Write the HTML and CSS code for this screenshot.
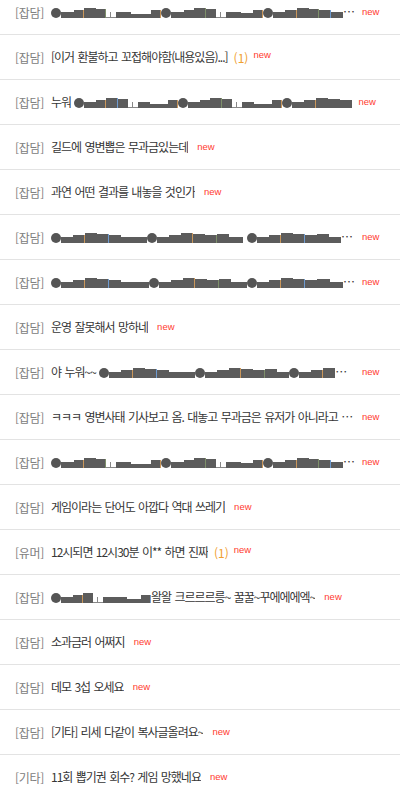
FILE: index.html
```html
<!DOCTYPE html>
<html lang="ko">
<head>
<meta charset="utf-8">
<title>게시판</title>
<link rel="stylesheet" href="styles.css">
</head>
<body>
<ul class="list">
  <li class="row"><span class="cat">[잡담]</span><span class="title"><span class="cz"><i class="c"></i><i class="k w13 h6"></i><i class="k w10 h8 eo"></i><i class="k w12 h10"></i><i class="k w10 h9 eg"></i><i class="tee"></i><i class="k w15 h6"></i><i class="k w20 h4"></i><i class="k w10 h8 eo"></i><i class="c"></i><i class="k w13 h6"></i><i class="k w10 h8"></i><i class="k w12 h10 eg"></i><i class="k w10 h9"></i><i class="tee"></i><i class="k w15 h6"></i><i class="k w12 h5"></i><i class="k w10 h8 eo"></i><i class="c"></i><i class="k w12 h6"></i><i class="k w12 h8 eo"></i><i class="k w12 h10"></i><i class="k w10 h9 eg"></i><i class="k w12 h8 eb"></i><i class="k w12 h6"></i><i class="k w12 h8"></i><i class="k w12 h9"></i></span></span><span class="new tr">new</span></li>
  <li class="row"><span class="cat">[잡담]</span><span class="title">[이거 환불하고 꼬접해야함(내용있음)...]</span><span class="cnt">(1)</span><span class="new sm">new</span></li>
  <li class="row"><span class="cat">[잡담]</span><span class="title">누워 <span class="cz"><i class="c"></i><i class="k w12 h6"></i><i class="k w10 h8 eo"></i><i class="k w12 h10 eb"></i><i class="k w10 h9"></i><i class="tee"></i><i class="k w12 h6"></i><i class="k w18 h4"></i><i class="k w10 h8 eo"></i><i class="c"></i><i class="k w12 h6"></i><i class="k w10 h8"></i><i class="k w12 h10 eg"></i><i class="k w10 h9"></i><i class="tee"></i><i class="k w12 h6"></i><i class="k w18 h4"></i><i class="k w10 h8 eo"></i><i class="c"></i><i class="k w12 h6"></i><i class="k w12 h8 eo"></i><i class="k w12 h10"></i><i class="k w12 h9"></i><i class="k w12 h8"></i></span></span><span class="new tr">new</span></li>
  <li class="row"><span class="cat">[잡담]</span><span class="title">길드에 영변뽑은 무과금있는데</span><span class="new">new</span></li>
  <li class="row"><span class="cat">[잡담]</span><span class="title">과연 어떤 결과를 내놓을 것인가</span><span class="new">new</span></li>
  <li class="row"><span class="cat">[잡담]</span><span class="title"><span class="cz"><i class="c"></i><i class="k w12 h6"></i><i class="k w12 h8 eo"></i><i class="k w12 h10"></i><i class="k w12 h9 eb"></i><i class="k w12 h8"></i><i class="k w12 h6"></i><i class="k w14 h6"></i><i class="c"></i><i class="k w12 h6"></i><i class="k w12 h8"></i><i class="k w12 h10 eo"></i><i class="k w12 h9"></i><i class="k w12 h8 eg"></i><i class="k w12 h9"></i><i class="k w14 h6"></i><i class="gap"></i><i class="c"></i><i class="k w12 h6"></i><i class="k w12 h8 eo"></i><i class="k w12 h10"></i><i class="k w12 h9 eb"></i><i class="k w12 h8"></i><i class="k w12 h9"></i><i class="k w12 h6"></i><i class="k w12 h8"></i><i class="k w12 h9"></i><i class="k w12 h6"></i></span></span><span class="new tr">new</span></li>
  <li class="row"><span class="cat">[잡담]</span><span class="title"><span class="cz"><i class="c"></i><i class="k w12 h6"></i><i class="k w12 h8 eo"></i><i class="k w12 h10"></i><i class="k w12 h9 eb"></i><i class="k w12 h8"></i><i class="k w12 h6"></i><i class="k w16 h6"></i><i class="c"></i><i class="k w12 h6"></i><i class="k w12 h8"></i><i class="k w12 h10 eo"></i><i class="k w12 h9"></i><i class="k w12 h8 eg"></i><i class="k w12 h9"></i><i class="k w16 h6"></i><i class="c"></i><i class="k w12 h6"></i><i class="k w12 h8 eo"></i><i class="k w12 h10"></i><i class="k w12 h9 eb"></i><i class="k w12 h8"></i><i class="k w13 h9"></i><i class="k w13 h6"></i><i class="k w18 h8"></i></span></span><span class="new tr">new</span></li>
  <li class="row"><span class="cat">[잡담]</span><span class="title">운영 잘못해서 망하네</span><span class="new">new</span></li>
  <li class="row"><span class="cat">[잡담]</span><span class="title">야 누워~~ <span class="cz"><i class="c"></i><i class="k w12 h6"></i><i class="k w12 h8 eo"></i><i class="k w12 h10"></i><i class="k w12 h9 eb"></i><i class="k w12 h8"></i><i class="k w12 h6"></i><i class="k w14 h6"></i><i class="c"></i><i class="k w12 h6"></i><i class="k w12 h8"></i><i class="k w12 h10 eo"></i><i class="k w12 h9"></i><i class="k w12 h8 eg"></i><i class="k w12 h9"></i><i class="k w12 h6"></i><i class="c"></i><i class="k w12 h6"></i><i class="k w12 h8 eo"></i><i class="k w12 h10"></i><i class="k w12 h9"></i><i class="k w12 h8"></i></span></span><span class="new tr">new</span></li>
  <li class="row"><span class="cat">[잡담]</span><span class="title">ㅋㅋㅋ 영변사태 기사보고 옴. 대놓고 무과금은 유저가 아니라고 하는데 이게 말이 되냐</span><span class="new tr">new</span></li>
  <li class="row"><span class="cat">[잡담]</span><span class="title"><span class="cz"><i class="c"></i><i class="k w13 h6"></i><i class="k w10 h8 eo"></i><i class="k w12 h10"></i><i class="k w10 h9 eg"></i><i class="tee"></i><i class="k w15 h6"></i><i class="k w20 h4"></i><i class="k w10 h8 eo"></i><i class="c"></i><i class="k w13 h6"></i><i class="k w10 h8"></i><i class="k w12 h10 eg"></i><i class="k w10 h9"></i><i class="tee"></i><i class="k w15 h6"></i><i class="k w12 h5"></i><i class="k w10 h8 eo"></i><i class="c"></i><i class="k w12 h6"></i><i class="k w12 h8 eo"></i><i class="k w12 h10"></i><i class="k w10 h9 eg"></i><i class="k w12 h8 eb"></i><i class="k w12 h6"></i><i class="k w12 h8"></i><i class="k w12 h9"></i></span></span><span class="new tr">new</span></li>
  <li class="row"><span class="cat">[잡담]</span><span class="title">게임이라는 단어도 아깝다 역대 쓰레기</span><span class="new">new</span></li>
  <li class="row"><span class="cat">[유머]</span><span class="title">12시되면 12시30분 이** 하면 진짜</span><span class="cnt">(1)</span><span class="new sm">new</span></li>
  <li class="row"><span class="cat">[잡담]</span><span class="title"><span class="cz"><i class="c"></i><i class="k w12 h6"></i><i class="k w10 h8 eo"></i><i class="k w10 h10"></i><i class="tee"></i><i class="k w12 h6"></i><i class="k w12 h6"></i><i class="k w14 h4"></i><i class="k w10 h8 eb"></i></span>왈왈 크르르르릉~ 꿀꿀~꾸에에에엑~</span><span class="new">new</span></li>
  <li class="row"><span class="cat">[잡담]</span><span class="title">소과금러 어쩌지</span><span class="new">new</span></li>
  <li class="row"><span class="cat">[잡담]</span><span class="title">데모 3섭 오세요</span><span class="new">new</span></li>
  <li class="row"><span class="cat">[잡담]</span><span class="title">[기타] 리세 다같이 복사글올려요~</span><span class="new">new</span></li>
  <li class="row"><span class="cat">[기타]</span><span class="title">11회 뽑기권 회수? 게임 망했네요</span><span class="new">new</span></li>
</ul>
</body>
</html>
```

FILE: styles.css
```css
html, body {
  margin: 0;
  padding: 0;
  background: #fff;
}
body {
  font-family: "Noto Sans CJK KR", "Noto Sans", sans-serif;
  font-size: 12px;
  color: #333;
  overflow: hidden;
}
.list {
  list-style: none;
  margin: -10px 0 0 0;
  padding: 0;
}
.row {
  display: flex;
  align-items: center;
  height: 44px;
  border-bottom: 1px solid #e3e3e3;
  padding-left: 15px;
  white-space: nowrap;
}
.cat {
  color: #808080;
  margin-right: 7px;
  flex: none;
  letter-spacing: -0.3px;
}
.title {
  color: #363636;
  max-width: 305px;
  overflow: hidden;
  text-overflow: ellipsis;
  white-space: nowrap;
  line-height: 16px;
  letter-spacing: -1px;
  word-spacing: 1px;
}
.cnt {
  color: #f0a030;
  margin-left: 6px;
  flex: none;
}
.new {
  color: #ff3b30;
  font-family: "Liberation Sans", Arial, sans-serif;
  font-size: 9.5px;
  margin-left: 9px;
  position: relative;
  top: -1px;
  flex: none;
}
.new.sm {
  margin-left: 5px;
  top: -3px;
}
.new.tr {
  margin-left: 6px;
}
.cz {
  letter-spacing: 0;
  word-spacing: 0;
}
.cz i {
  display: inline-block;
  vertical-align: baseline;
  margin-bottom: -1px;
}
.c {
  width: 10px;
  height: 10px;
  border-radius: 50%;
  background: #555;
}
.k { background: #5c5c5c; box-sizing: border-box; }
.eo { border-right: 1px solid #c9965a; }
.eg { border-right: 1px solid #7d8f6a; }
.eb { border-right: 1px solid #6e9bd0; }
.w10 { width: 10px; }
.w12 { width: 12px; }
.w13 { width: 13px; }
.w14 { width: 14px; }
.w15 { width: 15px; }
.w16 { width: 16px; }
.w18 { width: 18px; }
.w20 { width: 20px; }
.h4 { height: 4px; }
.h5 { height: 5px; }
.h6 { height: 6px; }
.h8 { height: 8px; }
.h9 { height: 9px; }
.h10 { height: 10px; }
.tee {
  width: 10px;
  height: 5px;
  position: relative;
  border-bottom: 1px solid #888;
  box-sizing: border-box;
}
.tee::before {
  content: "";
  position: absolute;
  left: 4px;
  bottom: 0;
  width: 1px;
  height: 5px;
  background: #888;
}
.gap { width: 4px; }
```
